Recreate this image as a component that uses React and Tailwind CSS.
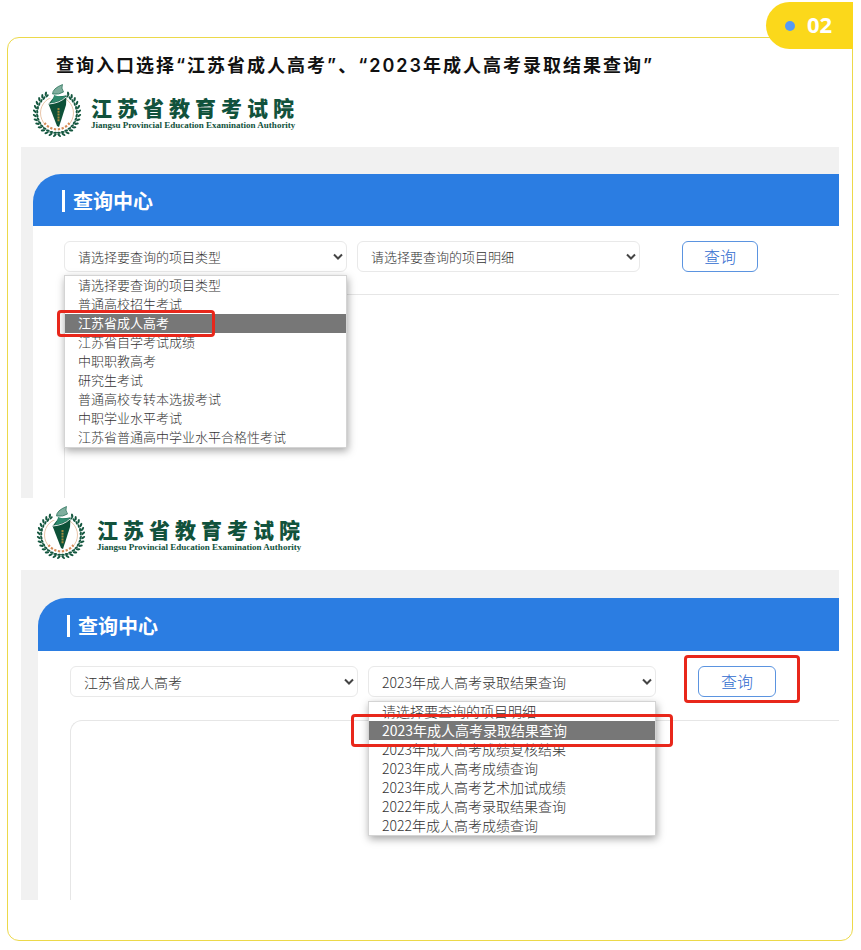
import React from "react";

const sans = "font-['Noto_Sans_CJK_SC','Noto_Sans',sans-serif]";

const wreath = Array.from({ length: 28 }, (_, i) => -60 + (i * 300) / 27);

function Emblem() {
  return (
    <svg viewBox="0 0 60 60" className="size-15 shrink-0" aria-hidden="true">
      <circle cx="28" cy="33" r="16.5" fill="none" stroke="#e3b794" strokeWidth="0.8" />
      <path d="M14 43.5 A17 17 0 0 0 42 43.5" fill="none" stroke="#fff" strokeWidth="4" />
      <path d="M15.500 43 A15.5 15.5 0 0 0 40.500 43" fill="none" stroke="#d58a55" strokeWidth="2.2" strokeDasharray="2.2 1.6" />
      {wreath.map((a, i) => {
        const lean = i < 14 ? -1 : 1;
        return (
          <g key={a} transform={`rotate(${a} 28 33)`} fill="#14573f">
            <ellipse cx="50.3" cy="33" rx="2.3" ry="1.1" transform={`rotate(${40 * lean} 50.3 33)`} />
            <ellipse cx="47.8" cy="33" rx="2" ry="1" transform={`rotate(${75 * lean} 47.8 33)`} />
          </g>
        );
      })}
      <path d="M23.500 4 H35 L38 15 L37 18 H20 Z" fill="#fff" />
      <path d="M19.500 24 L25 17 L37.500 15.5 L37 25 L30 47 L28 46 Z" fill="#0d5138" />
      <path d="M25 15 Q31 17.5 37 15.5 Q35 20 21 23.5 Q24.500 20 25 15 Z" fill="#2f8a6e" />
      <path d="M20 24 Q31 23 37 17" fill="none" stroke="#fff" strokeWidth="0.9" />
      <path d="M33.500 4.500 Q32 8 34.500 12 Q30 15 23.500 14 Q23.500 8.500 33.500 4.500 Z" fill="#7fae9e" stroke="#1c6a50" strokeWidth="0.7" />
      <path d="M29.500 28 V42" stroke="#a58a3f" strokeWidth="2" strokeDasharray="2 0.8" />
    </svg>
  );
}

function Brand({ large }) {
  return (
    <div className={`flex items-center ${large ? "gap-1 pt-1 pl-3" : "gap-0.5 pl-2"}`}>
      <Emblem />
      <div className="flex flex-col items-start pt-1 text-[#11523c]">
        <div className={`text-[21px] leading-[26px] font-black tracking-[5px] ${sans}`}>
          江苏省教育考试院
        </div>
        <div className="font-['Liberation_Serif',serif] text-[9px] leading-[10px] font-bold whitespace-nowrap">
          Jiangsu Provincial Education Examination Authority
        </div>
      </div>
    </div>
  );
}

function Picker({ id, label, value, large, children }) {
  return (
    <div className={`relative min-w-0 ${large ? "w-72" : "w-[283px]"}`}>
      <label htmlFor={id} className="sr-only">
        {label}
      </label>
      <select
        id={id}
        defaultValue={value}
        className={`block h-[31px] w-full appearance-none rounded-md border border-[#e9e9e9] bg-white pr-6 pl-[13px] leading-7 font-light text-[#333] outline-none ${
          large ? "text-sm" : "text-[13px]"
        }`}
      >
        <option>{value}</option>
      </select>
      <svg viewBox="0 0 10 8" className="pointer-events-none absolute top-3 right-1 h-2 w-2.5" aria-hidden="true">
        <path d="M1 1.500 L5 5.500 L9 1.500" fill="none" stroke="#444" strokeWidth="2" />
      </svg>
      {children}
    </div>
  );
}

function Menu({ items, selected, large, mark }) {
  return (
    <ul
      role="listbox"
      aria-label="选项"
      className={`absolute top-full z-10 w-full border border-[#d4d4d4] bg-white font-light text-[#333] shadow-[1px_3px_8px_rgba(0,0,0,0.35)] ${
        large ? "mt-1 text-sm leading-[19px]" : "mt-[3px] text-[13px] leading-[17px]"
      }`}
    >
      {items.map((item) => (
        <li
          key={item}
          role="option"
          aria-selected={item === selected}
          className={`relative h-[19px] pl-[13px] whitespace-nowrap ${
            item === selected ? "bg-[#777] font-normal text-white" : ""
          }`}
        >
          {item}
          {item === selected && (
            <span className={`absolute z-20 rounded-sm border-[3px] border-[#e8271b] ${mark}`} />
          )}
        </li>
      ))}
    </ul>
  );
}

function QueryPage({ large, children }) {
  return (
    <section>
      <Brand large={large} />
      <div className={`bg-[#f1f1f1] ${large ? "mt-2 pt-7 pl-[17px]" : "mt-[7px] pt-[27px] pl-3"}`}>
        <div className="rounded-tl-[28px] bg-white">
          <header
            className={`flex items-center gap-2 rounded-tl-[28px] bg-[#2b7de2] pt-0.5 pl-[29px] ${
              large ? "h-[53px]" : "h-[52px]"
            }`}
          >
            <span className="h-[22px] w-[3px] bg-white" />
            <h2 className="text-xl leading-6 font-bold text-white">查询中心</h2>
          </header>
          {children}
        </div>
      </div>
    </section>
  );
}

const queryButton =
  "block h-[31px] rounded-md border border-[#5b94e0] bg-white pb-0.5 text-base leading-7 font-light text-[#2f6bcf]";

export default function App() {
  return (
    <main className={`bg-white px-2 pt-[37px] pb-2 pl-[7px] ${sans}`}>
      <article className="relative rounded-xl border border-[#ecd94a] px-[13px] pb-10">
        <div className="absolute -top-9 -right-px flex h-[47px] w-[87px] items-center gap-3 rounded-l-full rounded-tr-lg bg-[#fbd81b] pl-[19px]">
          <span className="size-2.5 rounded-full bg-[#559bf5]" />
          <span className="pb-1 font-['Open_Sans','Noto_Sans',sans-serif] text-[22px] leading-7 font-bold text-white">
            02
          </span>
        </div>

        <h1 className="pt-3.5 pl-[35px] font-['Inter','Noto_Sans_CJK_SC',sans-serif] text-lg leading-7 font-semibold tracking-[2px] text-[#111]">
          查询入口选择“江苏省成人高考”、“2023年成人高考录取结果查询”
        </h1>

        <QueryPage>
          <div className="flex gap-2.5 pt-[15px] pl-[31px]">
            <Picker id="type-1" label="项目类型" value="请选择要查询的项目类型">
              <Menu
                selected="江苏省成人高考"
                mark="-top-1 -left-2 h-[27px] w-[158px]"
                items={[
                  "请选择要查询的项目类型",
                  "普通高校招生考试",
                  "江苏省成人高考",
                  "江苏省自学考试成绩",
                  "中职职教高考",
                  "研究生考试",
                  "普通高校专转本选拔考试",
                  "中职学业水平考试",
                  "江苏省普通高中学业水平合格性考试",
                ]}
              />
            </Picker>
            <Picker id="detail-1" label="项目明细" value="请选择要查询的项目明细" />
            <button type="button" className={`ml-8 w-[76px] ${queryButton}`}>
              查询
            </button>
          </div>
          <div className="mt-[22px] ml-[31px] h-[204px] rounded-tl-xl border-t border-l border-[#e6e6e6]" />
        </QueryPage>

        <QueryPage large>
          <div className="flex gap-2.5 pt-[15px] pl-8">
            <Picker large id="type-2" label="项目类型" value="江苏省成人高考" />
            <Picker large id="detail-2" label="项目明细" value="2023年成人高考录取结果查询">
              <Menu
                large
                selected="2023年成人高考录取结果查询"
                mark="-top-[7px] -left-[18px] h-[33px] w-[322px]"
                items={[
                  "请选择要查询的项目明细",
                  "2023年成人高考录取结果查询",
                  "2023年成人高考成绩复核结果",
                  "2023年成人高考成绩查询",
                  "2023年成人高考艺术加试成绩",
                  "2022年成人高考录取结果查询",
                  "2022年成人高考成绩查询",
                ]}
              />
            </Picker>
            <div className="relative ml-8">
              <button type="button" className={`w-[78px] ${queryButton}`}>
                查询
              </button>
              <span className="pointer-events-none absolute -top-[11px] -left-3.5 h-12 w-[116px] rounded-sm border-[3px] border-[#e8271b]" />
            </div>
          </div>
          <div className="mt-[23px] ml-8 h-[180px] rounded-tl-xl border-t border-l border-[#e6e6e6]" />
        </QueryPage>
      </article>
    </main>
  );
}
